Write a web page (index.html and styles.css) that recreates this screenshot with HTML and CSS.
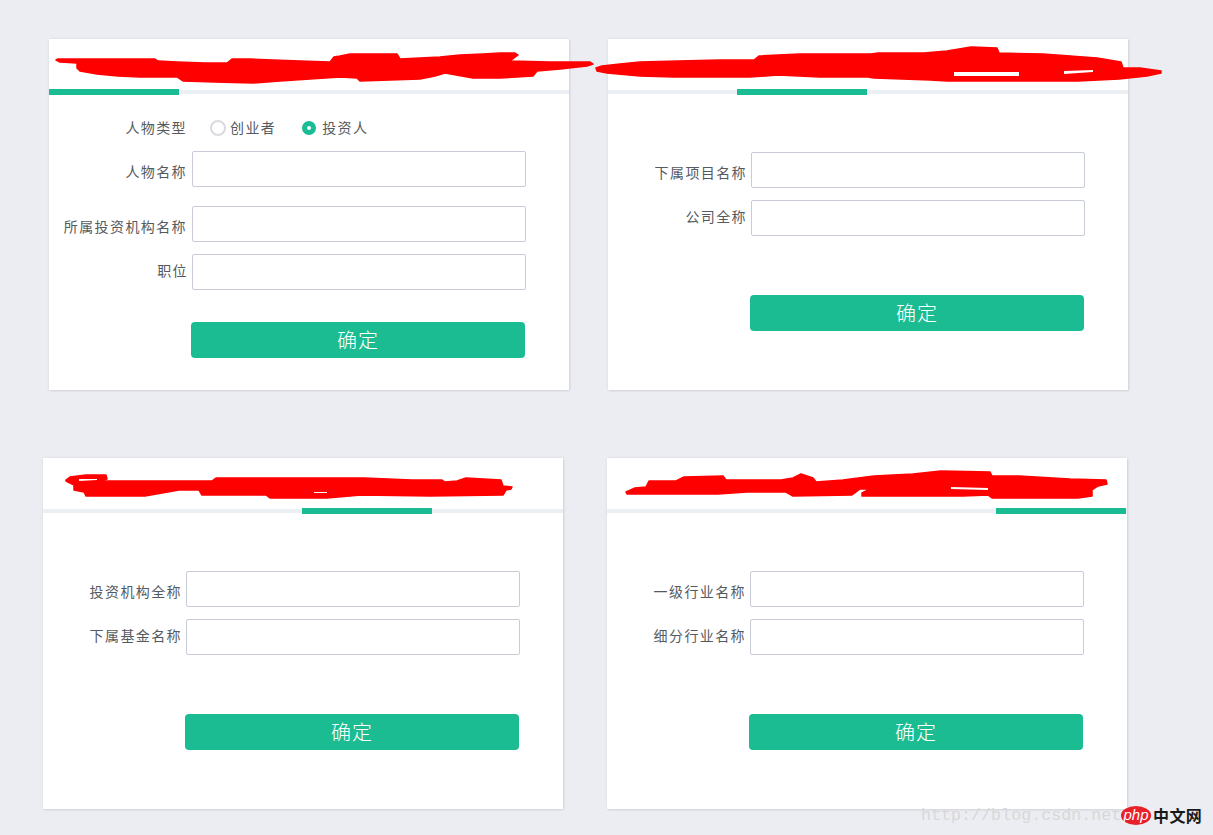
FILE: index.html
```html
<!DOCTYPE html>
<html lang="zh">
<head>
    <meta charset="UTF-8">
    <title>人物</title>
    <link rel="stylesheet" href="styles.css">
</head>
<body>
<div class="row row-top">
    <div class="card">
        <div class="card-head"></div>
        <div class="tabs"><span class="tab"></span></div>
        <form class="form form-person">
            <div class="field field-type">
                <label class="label up">人物类型</label>
                <span class="radio"></span><span class="radio-text up">创业者</span>
                <span class="radio radio-on"></span><span class="radio-text up">投资人</span>
            </div>
            <div class="field"><label class="label low">人物名称</label><input class="input" type="text"></div>
            <div class="field field-far"><label class="label low">所属投资机构名称</label><input class="input" type="text"></div>
            <div class="field"><label class="label high shift">职位</label><input class="input" type="text"></div>
            <button class="submit submit-near" type="button">确定</button>
        </form>
    </div>
    <div class="card">
        <div class="card-head"></div>
        <div class="tabs"><span class="tab tab-2"></span></div>
        <form class="form">
            <div class="field"><label class="label low shift">下属项目名称</label><input class="input" type="text"></div>
            <div class="field"><label class="label high shift">公司全称</label><input class="input" type="text"></div>
            <button class="submit" type="button">确定</button>
        </form>
    </div>
</div>
<div class="row row-bottom">
    <div class="card">
        <div class="card-head"></div>
        <div class="tabs"><span class="tab tab-3"></span></div>
        <form class="form">
            <div class="field"><label class="label low shift">投资机构全称</label><input class="input" type="text"></div>
            <div class="field"><label class="label high shift">下属基金名称</label><input class="input" type="text"></div>
            <button class="submit" type="button">确定</button>
        </form>
    </div>
    <div class="card">
        <div class="card-head"></div>
        <div class="tabs"><span class="tab tab-4"></span></div>
        <form class="form">
            <div class="field"><label class="label low shift">一级行业名称</label><input class="input" type="text"></div>
            <div class="field"><label class="label high shift">细分行业名称</label><input class="input" type="text"></div>
            <button class="submit" type="button">确定</button>
        </form>
    </div>
</div>

<!-- red marker scribbles over the titles -->
<svg class="scribbles" width="1213" height="835" viewBox="0 0 1213 835">
    <path d="M56 60 L58 59 L90 59 L155 59 L158 61 L177 62 L205 63 L227 63 L232 59 L250 59 L273 60 L300 61 L330 62 L334 57 L340 56 L350 54 L397 54 L400 59 L420 58 L440 57 L460 55 L483 54 L500 53 L515 53 L518 55 L510 61 L550 62 L590 62 L593 64 L587 66 L560 69 L537 71 L533 76 L500 78 L473 78 L445 73 L435 76 L420 79 L390 80 L360 81 L357 78 L340 77 L310 79 L280 81 L253 83 L215 82 L183 81 L177 77 L140 77 L118 76 L97 74 L80 71 L77 68 L77 63 L60 62 Z"/>
    <path d="M596 68 L602 66 L620 64 L640 62 L678 61 L720 60 L754 60 L759 56 L800 54 L871 54 L878 53 L924 53 L947 51 L971 47 L997 48 L999 53 L1043 54 L1097 58 L1121 62 L1123 68 L1140 68 L1161 71 L1161 73 L1147 76 L1119 79 L1078 81 L1010 81 L947 81 L930 80 L874 78 L868 77 L820 77 L778 75 L750 77 L674 77 L640 76 L607 73 L597 71 Z"/>
    <path class="hole" d="M954 72 L1019 72 L1019 76 L954 76 Z M1064 71 L1093 70 L1093 72 L1064 74 Z"/>
    <path d="M66 480 L70 477 L86 475 L106 475 L107 479 L97 481 L150 481 L212 481 L216 478 L290 478 L364 478 L412 480 L442 480 L445 482 L457 481 L466 478 L501 480 L503 486 L512 487 L511 489 L506 490 L503 495 L430 496 L361 495 L327 498 L270 498 L266 495 L202 495 L199 490 L179 490 L145 496 L86 496 L84 492 L74 490 L74 485 L66 481 Z"/>
    <path class="hole" d="M79 479 L97 479 L97 480 L79 481 Z M314 492 L327 492 L327 493 L314 493 Z"/>
    <path d="M626 492 L635 488 L646 487 L649 481 L676 481 L684 477 L723 476 L726 480 L737 480 L781 480 L793 478 L801 474 L813 478 L816 482 L843 480 L874 476 L913 474 L941 471 L990 472 L992 476 L1019 476 L1070 479 L1106 480 L1107 484 L1098 486 L1092 490 L1092 496 L1078 498 L992 498 L988 495 L963 496 L862 496 L862 493 L870 489 L860 489 L852 495 L793 496 L786 492 L747 492 L718 494 L627 494 Z"/>
    <path class="hole" d="M951 487 L988 488 L988 490 L951 489 Z"/>
</svg>

<div class="watermark">http://blog.csdn.net</div>
<div class="site-logo"><span class="site-php">php</span><span class="site-name">中文网</span></div>
</body>
</html>
```

FILE: styles.css
```css
html, body {
    margin: 0;
    padding: 0;
}

body {
    position: relative;
    width: 1213px;
    height: 835px;
    overflow: hidden;
    background: #ebedf3;
    font-family: "Noto Sans CJK SC", "Noto Sans", sans-serif;
    color: #555a60;
}

.row {
    display: flex;
}

.row-top {
    padding: 39px 0 0 49px;
    gap: 39px;
}

.row-bottom {
    padding: 68px 0 0 43px;
    gap: 44px;
}

.card {
    width: 520px;
    height: 351px;
    background: #fff;
    box-shadow: 0 0 3px rgba(0, 0, 0, 0.08), 1px 1px 2px rgba(0, 0, 0, 0.08);
}

.card-head {
    height: 50px;
}

.tabs {
    height: 6px;
    background: linear-gradient(#fff 1px, #ebeef3 1px, #ebeef3 5px, #fff 5px);
}

.tab {
    display: block;
    width: 130px;
    height: 6px;
    background: #1abc93;
}

.tab-2 { margin-left: 129px; }
.tab-3 { margin-left: 259px; }
.tab-4 { margin-left: 389px; }

.form {
    padding: 57px 0 0;
}

.form-person {
    padding-top: 21px;
}

.field {
    display: flex;
    align-items: center;
    margin-bottom: 12px;
}

.field-type {
    height: 24px;
    margin-bottom: 11px;
}

.field-far {
    margin-top: 19px;
}

.label {
    width: 138px;
    margin-right: 5px;
    box-sizing: border-box;
    text-align: right;
    font-size: 14px;
    line-height: 20px;
    letter-spacing: 1.4px;
}

.shift {
    width: 139px;
    margin-right: 4px;
}

.low { padding-top: 4px; }
.high { padding-bottom: 4px; }
.up { padding-bottom: 2px; }

.input {
    width: 334px;
    height: 36px;
    box-sizing: border-box;
    border: 1px solid #c8ccd6;
    border-radius: 2px;
    background: #fff;
}

.radio {
    width: 16px;
    height: 16px;
    box-sizing: border-box;
    margin-left: 18px;
    border: 2px solid #d8dae0;
    border-radius: 50%;
}

.radio-on {
    width: 14px;
    height: 14px;
    margin-left: 26px;
    border: 5px solid #1abc93;
    background: #fff;
}

.radio-text {
    margin-left: 4px;
    font-size: 14px;
    line-height: 20px;
    letter-spacing: 1.4px;
}

.radio-on + .radio-text {
    margin-left: 6px;
}

.submit {
    display: block;
    width: 334px;
    height: 36px;
    margin: 59px 0 0 142px;
    padding: 0 0 2px;
    border: 0;
    border-radius: 4px;
    background: #1cbc92;
    color: #fff;
    font-family: inherit;
    font-size: 20px;
    font-weight: 300;
    letter-spacing: 1px;
}

.submit-near {
    margin-top: 32px;
}

.scribbles {
    position: absolute;
    left: 0;
    top: 0;
    fill: #f00;
    stroke: #f00;
    stroke-width: 1.5;
    stroke-linejoin: round;
}

.scribbles .hole {
    fill: #fff;
    stroke: none;
}

.watermark {
    position: absolute;
    left: 921px;
    top: 806px;
    font-family: "Liberation Mono", monospace;
    font-size: 16.7px;
    line-height: 20px;
    color: #d8d8d8;
}

.site-logo {
    position: absolute;
    left: 1121px;
    top: 806px;
    display: flex;
    align-items: center;
}

.site-php {
    width: 30px;
    height: 19px;
    border-radius: 50%;
    background: #e8202a;
    color: #fff;
    font-family: "Liberation Sans", sans-serif;
    font-size: 15px;
    font-style: italic;
    line-height: 17px;
    text-align: center;
}

.site-name {
    margin-left: 2px;
    color: #1a1a1a;
    font-size: 16px;
    font-weight: 700;
    line-height: 19px;
    letter-spacing: 0.4px;
}
```
